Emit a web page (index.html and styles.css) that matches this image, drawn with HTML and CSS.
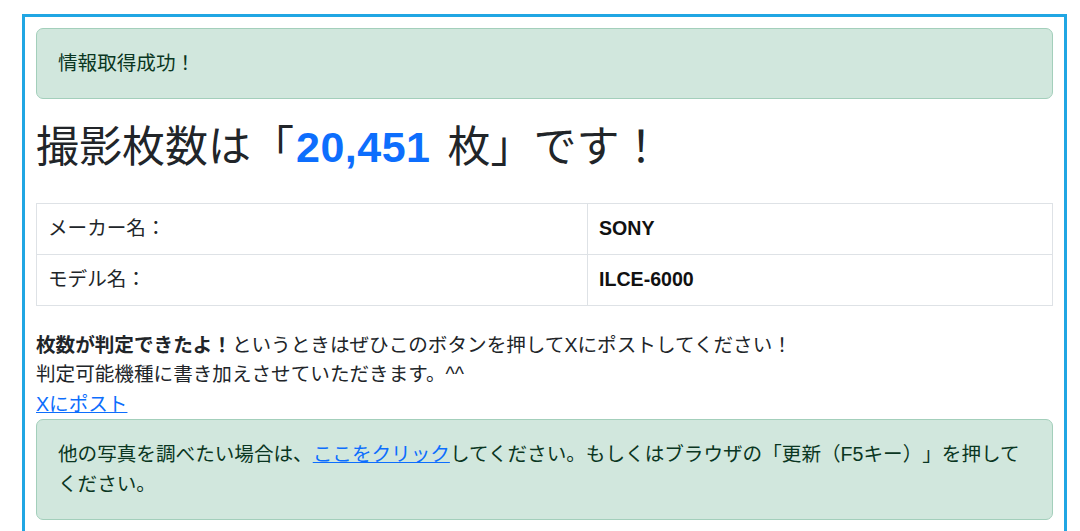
FILE: index.html
```html
<!DOCTYPE html>
<html lang="ja">
<head>
<meta charset="utf-8">
<title>撮影枚数</title>
<link rel="stylesheet" href="styles.css">
</head>
<body>
<div class="page">
  <div class="frame">
    <div class="alert alert-first">情報取得成功！</div>
    <h1 class="count-title">撮影枚数は「<span class="count-num">20,451</span> 枚」です！</h1>
    <table class="info-table">
      <tbody>
        <tr>
          <td class="label-cell">メーカー名：</td>
          <td class="value-cell">SONY</td>
        </tr>
        <tr>
          <td class="label-cell">モデル名：</td>
          <td class="value-cell">ILCE-6000</td>
        </tr>
      </tbody>
    </table>
    <p class="note"><strong>枚数が判定できたよ！</strong>というときはぜひこのボタンを押してXにポストしてください！<br>判定可能機種に書き加えさせていただきます。^^<br><a href="#" class="link">Xにポスト</a></p>
    <div class="alert">他の写真を調べたい場合は、<a href="#" class="link">ここをクリック</a>してください。もしくはブラウザの「更新（F5キー）」を押してください。</div>
  </div>
</div>
</body>
</html>
```
FILE: styles.css
```css
html {
  overflow: hidden;
}
body {
  margin: 0;
  background: #fff;
  color: #212529;
  font-family: "Liberation Sans", "Noto Sans CJK JP", sans-serif;
  font-size: 19.6px;
  line-height: 1.5;
  text-spacing-trim: space-all;
}
.page {
  padding: 14px 13px 0 22px;
}
.frame {
  border: 3px solid #20a6e3;
  padding: 11px;
  min-height: 600px;
}
.alert {
  background: #d1e7dd;
  border: 1px solid #a3cfbb;
  border-radius: 7px;
  color: #0a3622;
  padding: 20px 21px;
  margin-bottom: 19.6px;
}
.alert-first {
  margin-bottom: 22px;
}
.count-title {
  margin: 0 0 29.6px;
  font-size: 43px;
  line-height: 52px;
  font-weight: 400;
  color: #212529;
}
.count-num {
  color: #0d6efd;
  font-weight: 700;
  letter-spacing: 0.5px;
  margin: 0 5px 0 2px;
}
.info-table {
  width: 100%;
  border-collapse: collapse;
  margin: 0 0 25px;
}
.info-table td {
  border: 1px solid #dee2e6;
  padding: 10.3px 10px 10.3px 11px;
  vertical-align: top;
}
.label-cell {
  width: 529px;
}
.value-cell {
  font-weight: 700;
  color: #111;
}
.note {
  margin: 0;
}
.note strong {
  font-weight: 700;
}
.link {
  color: #0d6efd;
  text-decoration: underline;
}
```
